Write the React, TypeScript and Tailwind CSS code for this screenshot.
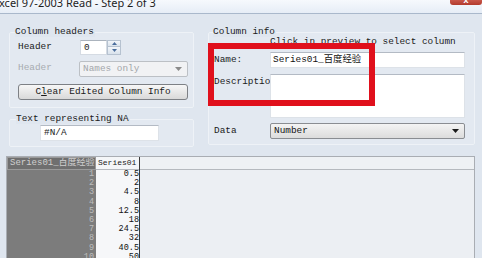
import React from "react";

const mono = { fontFamily: '"Liberation Mono", "Noto Sans CJK SC", monospace' };

function Arrow({ color = "#1a1a1a" }: { color?: string }) {
  return (
    <svg width="7" height="4" viewBox="0 0 7 4">
      <path d="M0 0 H7 L3.5 4 Z" fill={color} />
    </svg>
  );
}

function Select({ text, disabled = false, w }: { text: string; disabled?: boolean; w: string }) {
  return (
    <div
      className={`${w} h-[16px] flex items-center justify-between pl-[3px] pr-[5px] rounded-[2px] border ${
        disabled
          ? "border-[#bcc0c5] bg-[#f1f2f4] text-[#a3a6aa]"
          : "border-[#8a8d92] bg-gradient-to-b from-[#f4f4f4] to-[#dcdcdc] text-[#111]"
      }`}
    >
      <span className="leading-[14px]">{text}</span>
      <Arrow color={disabled ? "#8a8a8a" : "#1a1a1a"} />
    </div>
  );
}

export default function App() {
  const rows = ["0.5", "2", "4.5", "8", "12.5", "18", "24.5", "32", "40.5", "50"];
  return (
    <div
      className="relative w-[482px] h-[258px] overflow-hidden bg-[#dfe6ef] text-[9.4px] text-[#1a1a1a]"
      style={mono}
    >
      {/* title bar */}
      <div className="h-[14px] flex justify-between overflow-hidden bg-gradient-to-b from-[#f6f9fd] to-[#e6edf6] border-b border-[#a9b8cb]">
        <div
          className="text-[11px] leading-[11px] -mt-[3px] text-[#1e1e1e] whitespace-nowrap -ml-[1px]"
          style={{ fontFamily: '"Noto Sans", sans-serif' }}
        >
          xcel 97-2003 Read - Step 2 of 3
        </div>
        <div className="w-[32px] h-[5px] bg-gradient-to-b from-[#c9574a] to-[#b23a2c] rounded-b-[3px] flex justify-center overflow-hidden">
          <span className="text-white text-[9px] leading-[6px] font-bold -mt-[2px]">x</span>
        </div>
      </div>

      {/* top area */}
      <div className="flex pl-[9px] pt-[13px] gap-[14px]">
        {/* left column */}
        <div className="w-[185px] flex flex-col">
          <div className="relative z-10 pl-[6px] h-[9px] leading-[9px] -mb-[4px]">
            <span className="bg-[#dfe6ef] pr-[1px]">Column headers</span>
          </div>
          <div className="h-[76px] border border-[#eef2f7] bg-[#e3e9f1] rounded-[2px] pl-[8px] pt-[7px] flex flex-col">
            <div className="flex items-center h-[15px]">
              <span className="w-[62px]">Header</span>
              <div className="flex h-[15px]">
                <div className="w-[27px] h-[15px] bg-white border border-[#d5dbe3] border-t-[#abb3bd] pl-[3px] leading-[13px]">
                  0
                </div>
                <div className="w-[14px] flex flex-col">
                  <div className="h-[7px] bg-gradient-to-b from-[#f3f6fa] to-[#d9e2ec] border border-[#b6c2d0] flex items-center justify-center">
                    <svg width="5" height="3" viewBox="0 0 5 3"><path d="M0 3 L2.5 0 L5 3 Z" fill="#4a6d9c" /></svg>
                  </div>
                  <div className="h-[8px] bg-gradient-to-b from-[#f3f6fa] to-[#d9e2ec] border border-t-0 border-[#b6c2d0] flex items-center justify-center">
                    <svg width="5" height="3" viewBox="0 0 5 3"><path d="M0 0 L5 0 L2.5 3 Z" fill="#4a6d9c" /></svg>
                  </div>
                </div>
              </div>
            </div>
            <div className="flex items-center h-[17px] mt-[5px]">
              <span className="w-[61px] text-[#a7abb0]">Header</span>
              <Select text="Names only" disabled w="w-[109px]" />
            </div>
            <div className="mt-[7px] w-[170px] h-[16px] rounded-[3px] border border-[#7d8085] bg-gradient-to-b from-[#f7f7f7] to-[#d9d9d9] flex items-center justify-center leading-[14px]">
              <span>
                C<span className="underline underline-offset-[1px]">l</span>ear Edited Column Info
              </span>
            </div>
          </div>

          <div className="relative z-10 pl-[7px] h-[9px] leading-[9px] mt-[6px] -mb-[4px]">
            <span className="bg-[#dfe6ef] pr-[1px]">Text representing NA</span>
          </div>
          <div className="h-[28px] border border-[#eef2f7] bg-[#e3e9f1] rounded-[2px] pl-[30px] pt-[5px]">
            <div className="w-[119px] h-[16px] bg-white border border-[#dde2e8] border-t-[#b3bac4] pl-[3px] leading-[14px]">
              #N/A
            </div>
          </div>
        </div>

        {/* right group */}
        <div className="w-[267px] flex flex-col">
          <div className="relative z-10 pl-[5px] h-[9px] leading-[9px] -mb-[4px]">
            <span className="bg-[#dfe6ef] pr-[1px]">Column info</span>
          </div>
          <div className="h-[113px] border border-[#eef2f7] bg-[#e3e9f1] rounded-[2px] pl-[5px] flex flex-col">
            <div className="pl-[56px] leading-[10px] h-[10px] mt-[4px]">
              Click in preview to select column
            </div>
            <div className="flex items-center mt-[5px]">
              <span className="w-[56px] overflow-hidden whitespace-nowrap">Name:</span>
              <div className="w-[195px] h-[16px] bg-white border border-[#dde2e8] border-t-[#b3bac4] pl-[2px] leading-[14px] text-[#111]">
                Series01_百度经验
              </div>
            </div>
            <div className="flex mt-[6px]">
              <span className="w-[56px] overflow-hidden whitespace-nowrap pt-[1px]">Description:</span>
              <div className="w-[195px] h-[44px] bg-white border border-[#dde2e8] border-t-[#b3bac4]" />
            </div>
            <div className="flex items-center mt-[5px]">
              <span className="w-[56px]">Data</span>
              <Select text="Number" w="w-[195px]" />
            </div>
          </div>
        </div>
      </div>

      {/* preview */}
      <div className="ml-[6px] mt-[9px] w-[469px] h-[120px] border border-[#a9adb3] bg-[#eceff3] flex">
        <div className="w-[89px] flex flex-col bg-[#7c7c7c]">
          <div
            className="h-[13px] bg-[#6f6f6f] border border-[#9a9a9a] text-[#cfcfcf] text-[9px] leading-[11px] pl-[2px] whitespace-nowrap overflow-hidden"
            style={mono}
          >
            Series01_百度经验
          </div>
          <div className="flex flex-col items-end pr-[2px] text-[8.5px] text-[#bdbdbd]">
            {rows.map((_, i) => (
              <div key={i} className="h-[9.2px] leading-[9.2px]">
                {i + 1}
              </div>
            ))}
          </div>
        </div>
        <div className="w-[44px] flex flex-col bg-[#f6f7f9] border-r border-[#3a3a3a]">
          <div className="h-[13px] border-b border-[#b5b9be] text-[8px] leading-[12px] pl-[2px] bg-[#f4f6f8]">
            Series01
          </div>
          <div className="flex flex-col items-end text-[8.5px] text-[#111]">
            {rows.map((v, i) => (
              <div key={i} className="h-[9.2px] leading-[9.2px]">
                {v}
              </div>
            ))}
          </div>
        </div>
        <div className="flex-1 flex flex-col">
          <div className="h-[13px] border-b border-[#b5b9be] bg-[#eef1f4]" />
        </div>
      </div>

      {/* red annotation */}
      <div className="absolute left-[208px] top-[43px] w-[167px] h-[63px] border-[6px] border-[#e0101c]" />
    </div>
  );
}
